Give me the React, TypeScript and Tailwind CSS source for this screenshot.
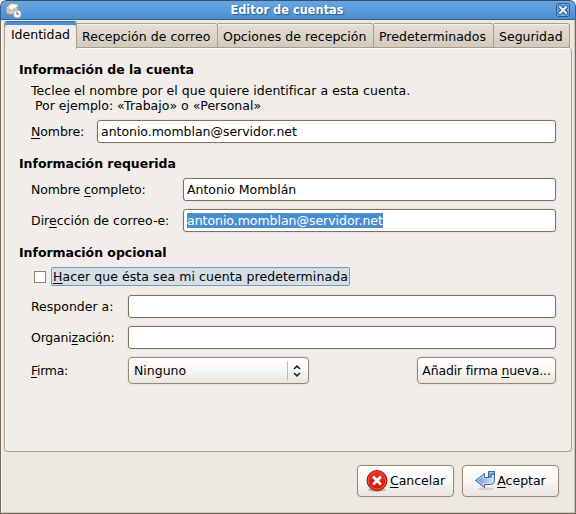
import type { ReactNode } from "react";

const entry =
  "flex h-[23px] items-center rounded-[3px] border border-[#7f7262] bg-white px-[3px] tracking-[-0.03px] shadow-[0_0_0_1px_#e8e4de]";
const button =
  "flex items-center rounded-[4px] border border-[#968777] bg-linear-to-b from-white via-[#f8f7f5] to-[#e9e5de] shadow-[0_0_0_1px_#e8e4dc]";

function Key({ children }: { children: ReactNode }) {
  return <span className="underline decoration-1 underline-offset-2">{children}</span>;
}

function Heading({ children }: { children: ReactNode }) {
  return <h2 className="h-4 pl-[14px] font-bold leading-[17px] tracking-[-0.03px]">{children}</h2>;
}

function MailClockIcon() {
  return (
    <svg width="17" height="17" viewBox="0 0 17 17">
      <path d="M1 5.5 5.500 1l7 .5 1 2L12 12.500 1.500 12z" fill="#dedad2" stroke="#858078" strokeWidth=".8" />
      <path d="m3.300 5 3-3.200 6.200.7-1.500 4.500-5 1z" fill="#fff" stroke="#b4aea5" strokeWidth=".5" />
      <path d="m1.200 6 4.400 2.800 7-4M1.500 11.700l3.600-3.300" fill="none" stroke="#a39b90" strokeWidth=".8" />
      <circle cx="12.300" cy="12" r="3.800" fill="#f9fbfd" stroke="#c0c9d3" strokeWidth="1.300" />
      <circle cx="12.300" cy="12" r="4.400" fill="none" stroke="#7087a0" strokeWidth=".5" />
      <path d="M12 9.500v2.800h2" fill="none" stroke="#45515e" strokeWidth=".9" />
    </svg>
  );
}

function CloseIcon() {
  return (
    <svg width="14" height="14" viewBox="0 0 14 14">
      <rect x=".5" y=".5" width="13" height="13" rx="2.5" fill="#5c9cdb" stroke="#285d94" />
      <rect x="1.5" y="1.5" width="11" height="11" rx="1.5" fill="none" stroke="#7bb2e6" />
      <path d="m4 4 6 6m0-6-6 6" stroke="#285d94" strokeWidth="4" strokeLinecap="square" />
      <path d="m4 4 6 6m0-6-6 6" stroke="#eef5fb" strokeWidth="2.1" strokeLinecap="square" />
    </svg>
  );
}

function CancelIcon() {
  return (
    <svg width="22" height="24" viewBox="0 0 22 24">
      <ellipse cx="11" cy="20.7" rx="9" ry="2" fill="#000" opacity=".25" />
      <circle cx="11" cy="11.5" r="10" fill="#dc1808" stroke="#a80800" />
      <circle cx="11" cy="11.5" r="8.8" fill="none" stroke="#f26a5c" strokeWidth=".9" />
      <path d="M2.5 10.5a8.5 8.5 0 0 1 17 0c-5 3-11 0-17 0" fill="#ed4535" opacity=".45" />
      <path d="m8 8.5 6 6m0-6-6 6" stroke="#fff" strokeWidth="2.7" strokeLinecap="square" />
    </svg>
  );
}

function EnterIcon() {
  return (
    <svg width="22" height="22" viewBox="0 0 22 22">
      <defs>
        <linearGradient id="arrow" x1="0" x2="1">
          <stop offset="0" stopColor="#5f8fca" />
          <stop offset="1" stopColor="#dce8f5" />
        </linearGradient>
      </defs>
      <ellipse cx="11" cy="18.800" rx="8" ry="1.600" fill="#000" opacity=".12" />
      <path d="M13.500 1.500h6v9q0 4-4 4H9.500v3L.5 10.500l9-7v4h5v-1h-1z" fill="url(#arrow)" stroke="#3b669d" strokeLinejoin="round" />
      <path d="M18.500 6v4.500q0 3-3 3h-7v2L2.200 10.500l6.300-5v3h6.500q1 0 1.500-1.500" fill="none" stroke="#c5d9ef" strokeWidth=".9" />
      <path d="M13.500 1.500h6v3h-3v2.500h-3z" fill="#6f95c4" stroke="#3b669d" strokeWidth=".8" />
      <path d="M14.500 2.500h4" stroke="#b7cfea" strokeWidth=".8" />
    </svg>
  );
}

const tabs = [
  { label: "Recepción de correo", box: "w-[141px] pl-[5px] tracking-[0.05px]" },
  { label: "Opciones de recepción", box: "w-[156px] pl-[5px] tracking-[0.05px]" },
  { label: "Predeterminados", box: "w-[120px] pl-[5px] tracking-[0.05px]" },
  { label: "Seguridad", box: "w-[76px] pl-[5px]" },
];

export default function App() {
  return (
    <div className="h-[514px] w-[576px] bg-white font-['DejaVu_Sans',sans-serif] text-[12.5px] leading-4 text-black">
      <div className="flex h-full flex-col overflow-hidden rounded-t-[6px] bg-[#ede9e2]">
        <header className="flex h-5 shrink-0 items-center rounded-t-[6px] border border-[#365f8b] border-t-[#354e69] bg-linear-to-b from-[#67a6e4] to-[#4a8fd2] pl-1 pr-[5px]">
          <MailClockIcon />
          <h1 className="flex-1 pr-[4px] text-center text-[11.4px] font-bold text-white [text-shadow:1px_1px_1px_#285988]">Editor de cuentas</h1>
          <CloseIcon />
        </header>
        <div className="flex flex-1 flex-col border-x border-b border-[#71675d] pl-[3px] pr-[3px] shadow-[inset_1px_0_#faf8f5,inset_-1px_-1px_#d1c7b9]">
          <nav className="z-10 flex h-[28px] items-end">
            <div className="mb-[-1px] flex h-[28px] w-[73px] items-center justify-center rounded-t-[3px] border border-b-0 border-x-[#a99d8c] border-t-[#3b71a6] bg-[#f1eee9] pb-px shadow-[inset_0_3px_#4c90d2]">
              Identidad
            </div>
            {tabs.map((tab) => (
              <div key={tab.label} className={`${tab.box} flex h-[25px] shrink-0 items-center whitespace-nowrap rounded-tr-[3px] border border-l-0 border-[#a99d8c] bg-linear-to-b from-[#e5dfd7] to-[#d3cabe] pt-[3px] shadow-[inset_0_1px_#f1ede7]`}>
                {tab.label}
              </div>
            ))}
          </nav>
          <main className="flex h-[404px] w-[568px] flex-col rounded-b-[4px] rounded-tr-[3px] border border-t-0 border-[#a99d8c] bg-[#f1eee9] pr-[15px] pt-[13px] shadow-[inset_1px_1px_#fff]">
            <Heading>Información de la cuenta</Heading>
            <p className="mt-[6px] h-[15px] pl-[26px] leading-[15px] tracking-[0.03px]">Teclee el nombre por el que quiere identificar a esta cuenta.</p>
            <p className="h-[15px] pl-[30px] leading-[15px]">Por ejemplo: «Trabajo» o «Personal»</p>
            <div className="mt-[7px] flex items-center pl-[26px]">
              <label className="w-[66px] tracking-[-0.1px]"><Key>N</Key>ombre:</label>
              <div className={`${entry} flex-1`}>antonio.momblan@servidor.net</div>
            </div>
            <div className="mt-[12px]"><Heading>Información requerida</Heading></div>
            <div className="mt-[7px] flex items-center pl-[26px]">
              <label className="w-[152px] tracking-[-0.1px]">Nombre <Key>c</Key>ompleto:</label>
              <div className={`${entry} flex-1`}>Antonio Momblán</div>
            </div>
            <div className="mt-2 flex items-center pl-[26px]">
              <label className="w-[152px]">Dir<Key>e</Key>cción de correo-e:</label>
              <div className={`${entry} flex-1`}><span className="h-[15px] bg-[#4a8dce] leading-[15px] text-white">antonio.momblan@servidor.net</span></div>
            </div>
            <div className="mt-[12px]"><Heading>Información opcional</Heading></div>
            <div className="mt-[7px] flex h-[19px] items-center pl-[29px]">
              <span className="size-[12px] border border-[#8f8272] bg-white" />
              <label className="ml-[5px] flex h-[19px] w-[299px] items-center whitespace-nowrap rounded-[2px] border border-[#7898b8] bg-[#d5dfe7] pl-[1px] tracking-[0.07px]"><Key>H</Key>acer que ésta sea mi cuenta predeterminada</label>
            </div>
            <div className="mt-[9px] flex items-center pl-[26px]">
              <label className="w-[97px]">Responder a:</label>
              <div className={`${entry} flex-1`} />
            </div>
            <div className="mt-2 flex items-center pl-[26px]">
              <label className="w-[97px] tracking-[-0.2px]">Organi<Key>z</Key>ación:</label>
              <div className={`${entry} flex-1`} />
            </div>
            <div className="mt-2 flex items-center pl-[26px]">
              <label className="w-[97px] tracking-[-0.3px]"><Key>F</Key>irma:</label>
              <div className={`${button} h-[27px] w-[181px] justify-between pl-[5px] pr-[7px]`}>
                <span>Ninguno</span>
                <span className="flex h-[19px] items-center border-l border-[#c6b9a8] pl-[5px]">
                  <svg width="8" height="12" viewBox="0 0 8 12" fill="none" stroke="#222" strokeWidth="1.6"><path d="m1 4 3-2.8L7 4M1 8l3 2.8L7 8" /></svg>
                </span>
              </div>
              <div className={`${button} ml-auto h-[27px] w-[139px] justify-center whitespace-nowrap`}><span className="tracking-[-0.16px]">Añadir firma <Key>n</Key>ueva...</span></div>
            </div>
          </main>
          <footer className="mt-[13px] flex justify-end gap-2 pr-[13px]">
            <div className={`${button} h-8 w-[97px] justify-center gap-[2px]`}><CancelIcon /><span><Key>C</Key>ancelar</span></div>
            <div className={`${button} h-8 w-[97px] justify-center`}><EnterIcon /><span><Key>A</Key>ceptar</span></div>
          </footer>
        </div>
      </div>
    </div>
  );
}
